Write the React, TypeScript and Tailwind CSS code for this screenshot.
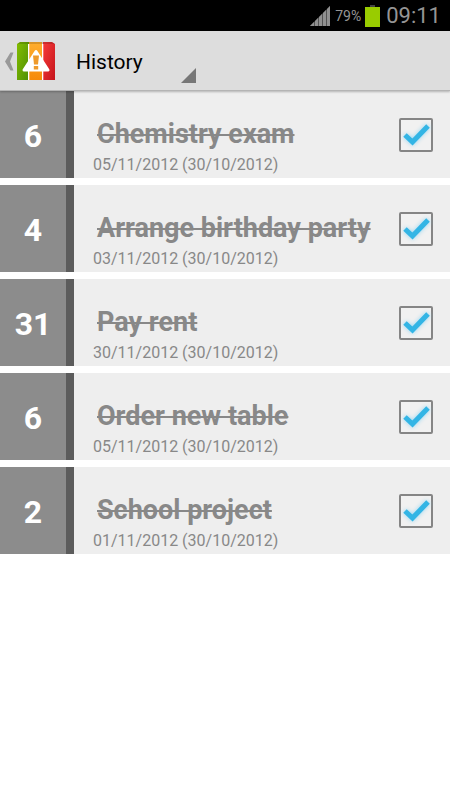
import React, { useState } from 'react'

interface HistoryTask {
  id: number
  badge: string
  title: string
  date: string
}

const TASKS: HistoryTask[] = [
  { id: 1, badge: '6', title: 'Chemistry exam', date: '05/11/2012 (30/10/2012)' },
  { id: 2, badge: '4', title: 'Arrange birthday party', date: '03/11/2012 (30/10/2012)' },
  { id: 3, badge: '31', title: 'Pay rent', date: '30/11/2012 (30/10/2012)' },
  { id: 4, badge: '6', title: 'Order new table', date: '05/11/2012 (30/10/2012)' },
  { id: 5, badge: '2', title: 'School project', date: '01/11/2012 (30/10/2012)' }
]

const SignalIcon = () => (
  <svg width="21" height="21" viewBox="0 0 21 21" aria-hidden="true">
    <path d="M0 21 4 17V21ZM5 16 8 13V21H5ZM9 12 12 9V21H9ZM13 8 16 5V21H13ZM17 4 20 1V21H17Z" fill="#9a9a9a" />
    <path d="M0 21 20 1V21Z" fill="#8a8a8a" opacity="0.6" />
  </svg>
)

const BatteryIcon = () => (
  <svg width="15" height="22" viewBox="0 0 15 22" aria-hidden="true">
    <path d="M5 0H10V2H5Z" fill="#444" />
    <path d="M0 2H15V22H0Z" fill="#99cc00" />
  </svg>
)

const AppLogo = () => (
  <svg width="38" height="38" viewBox="0 0 38 38" aria-hidden="true">
    <defs>
      <linearGradient id="green" x1="0" y1="0" x2="1" y2="1">
        <stop offset="0" stopColor="#83bd00" />
        <stop offset="1" stopColor="#4f8f05" />
      </linearGradient>
      <linearGradient id="orange" x1="0" y1="0" x2="0" y2="1">
        <stop offset="0" stopColor="#ffae2e" />
        <stop offset="1" stopColor="#f68a0a" />
      </linearGradient>
      <linearGradient id="red" x1="0" y1="0" x2="1" y2="1">
        <stop offset="0" stopColor="#f73a3a" />
        <stop offset="1" stopColor="#c4141b" />
      </linearGradient>
    </defs>
    <path d="M3 0H12V38H0V2Z" fill="url(#green)" />
    <path d="M12 0H25V38H12Z" fill="url(#orange)" />
    <path d="M26 0H35L38 2V38H26Z" fill="url(#red)" />
    <path d="M3 0H35L38 2H0Z" fill="#000" opacity="0.15" />
    <path d="M11 2H12.3V38H11ZM25 2H26.3V38H25Z" fill="#fff" />
    <path d="M19 9.5 31 28H7Z" fill="#fff" stroke="#fff" strokeWidth="3" strokeLinejoin="round" />
    <path d="M16 13.5H22L21 22.5H17Z" fill="#ee9a2c" />
    <path d="M16.8 24H21.2V27.5H16.8Z" fill="#ee9a2c" />
  </svg>
)

const StatusBar = () => (
  <div className="flex h-[31px] items-center justify-end gap-1 bg-black pr-[9px] text-[#959595]">
    <SignalIcon />
    <span className="text-sm">79%</span>
    <BatteryIcon />
    <span className="pl-[2px] text-[22px] leading-[31px]">09:11</span>
  </div>
)

const ActionBar = () => (
  <header className="relative z-10 flex h-[60px] items-center border-b border-[#b4b4b4] bg-[#dddddd] pl-1 shadow-[0_1px_2px_rgba(0,0,0,0.25)]">
    <button type="button" aria-label="Navigate up" className="flex items-center gap-[3px] pt-px">
      <svg width="10" height="19" viewBox="0 0 10 19" aria-hidden="true">
        <path d="M9.5 .5 6 9.5 9.5 18.5H6.5L1 9.5 6.5 .5Z" fill="#999" />
      </svg>
      <AppLogo />
    </button>
    <button type="button" aria-haspopup="menu" className="ml-[21px] flex h-full w-[120px] items-center justify-between pt-1 text-left text-[21px] text-black">
      History
      <svg width="15" height="15" viewBox="0 0 15 15" className="mb-[7px] self-end" aria-hidden="true">
        <path d="M15 0V15H0Z" fill="#777" />
      </svg>
    </button>
  </header>
)

interface TaskRowProps {
  task: HistoryTask
  checked: boolean
  onToggle: (id: number) => void
}

const TaskRow: React.FC<TaskRowProps> = ({ task, checked, onToggle }) => {
  const inputId = `task-${task.id}`

  return (
    <li className="flex h-[87px] bg-[#eeeeee]">
      <div className="flex w-[74px] shrink-0 items-center justify-center border-r-8 border-[#5c5c5c] bg-[#8c8c8c] pt-[3px] text-[32px] font-bold text-white">
        {task.badge}
      </div>
      <div className="flex min-w-0 flex-1 flex-col pt-[26px] pl-[19px] text-[#888888]">
        <label
          htmlFor={inputId}
          className={`pl-1 text-[27px] leading-[34px] font-bold whitespace-nowrap ${checked ? 'line-through decoration-2' : ''}`}
        >
          {task.title}
        </label>
        <span className="text-base leading-[28px] whitespace-nowrap">{task.date}</span>
      </div>
      <div className="mr-[17px] grid shrink-0 place-items-center self-center">
        <input
          id={inputId}
          type="checkbox"
          checked={checked}
          onChange={() => onToggle(task.id)}
          className="col-start-1 row-start-1 size-[34px] appearance-none rounded-xs border-2 border-[#858585] bg-[#f1f1f1]"
        />
        {checked && (
          <svg
            width="34"
            height="34"
            viewBox="0 0 34 34"
            className="pointer-events-none col-start-1 row-start-1 drop-shadow-[0_0_2px_#8fd4f2]"
            aria-hidden="true"
          >
            <path d="M6 17 13.5 24 29 8" fill="none" stroke="#33b5e5" strokeWidth="5" />
          </svg>
        )}
      </div>
    </li>
  )
}

export default function App() {
  const [checkedIds, setCheckedIds] = useState<number[]>(TASKS.map(task => task.id))

  const handleToggle = (id: number) => {
    setCheckedIds(ids => (ids.includes(id) ? ids.filter(other => other !== id) : [...ids, id]))
  }

  return (
    <div className="min-h-screen bg-white font-['Roboto',sans-serif]">
      <StatusBar />
      <ActionBar />
      {/* Finished tasks */}
      <ul className="flex flex-col gap-[7px]">
        {TASKS.map(task => (
          <TaskRow key={task.id} task={task} checked={checkedIds.includes(task.id)} onToggle={handleToggle} />
        ))}
      </ul>
    </div>
  )
}
